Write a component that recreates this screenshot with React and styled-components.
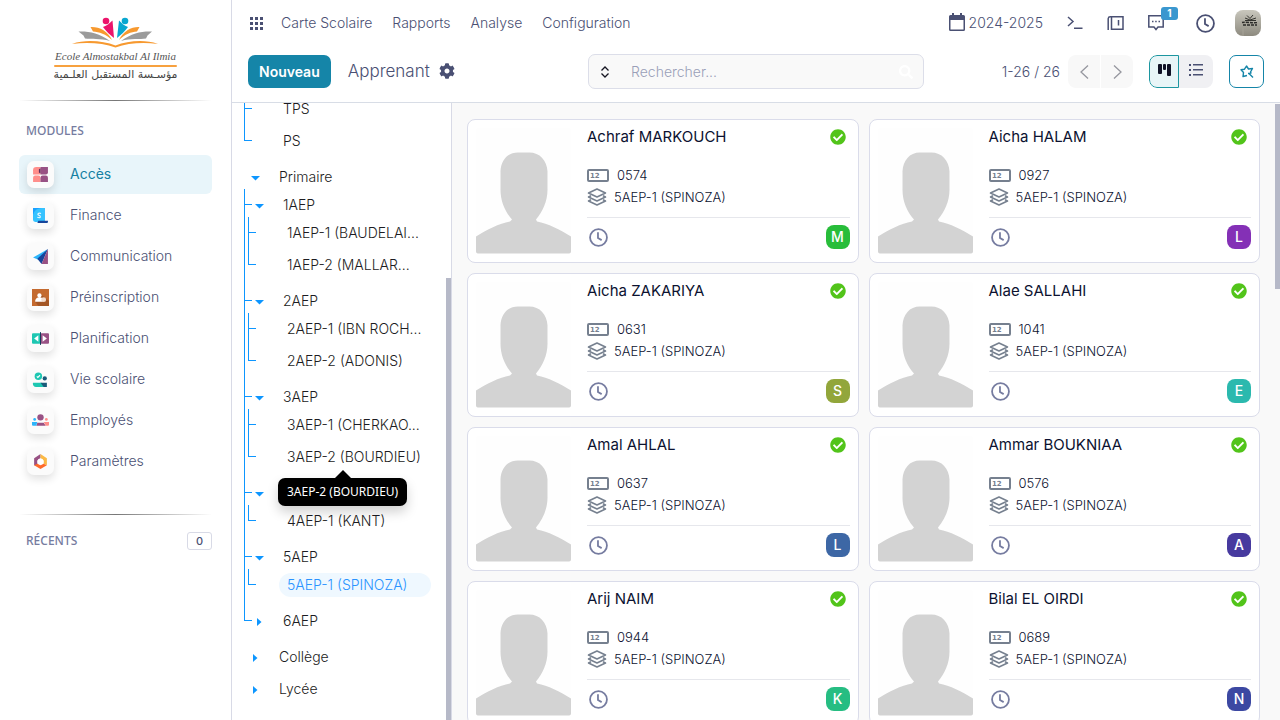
import React from "react";
import styled, { createGlobalStyle, css } from "styled-components";
import { FaCheckCircle, FaCog, FaSearch } from "react-icons/fa";

const GlobalStyle = createGlobalStyle`
  *, *::before, *::after { box-sizing: border-box; }
  body {
    margin: 0;
    background: #fff;
    color: #4a5073;
    font: 300 14px/20px Inter, "Noto Sans", sans-serif;
  }
  button, input { font: inherit; color: inherit; }
  button { border: 0; padding: 0; background: none; cursor: pointer; }
  a { color: inherit; text-decoration: none; }
  ul { list-style: none; margin: 0; padding: 0; }
  svg { display: block; flex: none; }
`;

/* ---------- Shell ---------- */

const Shell = styled.div`
  display: flex;
  height: 100vh;
  overflow: hidden;
`;

const Main = styled.div`
  flex: 1;
  min-width: 0;
  display: flex;
  flex-direction: column;
`;

const Workspace = styled.div`
  flex: 1;
  min-height: 0;
  display: flex;
`;

const ScrollThumb = styled.div`
  position: absolute;
  right: 0;
  top: ${(p) => p.$top}px;
  width: 5px;
  ${(p) => (p.$height ? `height: ${p.$height}px;` : "bottom: 0;")}
  background: #b6b9c8;
`;

/* ---------- Sidebar ---------- */

const Sidebar = styled.aside`
  flex: 0 0 232px;
  display: flex;
  flex-direction: column;
  padding: 16px 19px;
  border-right: 1px solid #d8dae6;
`;

const LogoLink = styled.a`
  align-self: center;
  height: 68px;
`;

const Rule = styled.hr`
  width: 100%;
  height: 1px;
  margin: 0;
  border: 0;
  background: linear-gradient(90deg, transparent, #777 50%, transparent);
`;

const SectionHead = styled.div`
  display: flex;
  align-items: center;
  justify-content: space-between;
  padding: 0 0 0 7px;
`;

const SectionTitle = styled.h2`
  margin: 0;
  font: 500 12px/20px "Noto Sans", sans-serif;
  color: #767ca0;
`;

const Spacer = styled.div`
  height: ${(p) => p.$size}px;
`;

const ModuleList = styled.ul`
  display: flex;
  flex-direction: column;
  gap: 2px;
`;

const ModuleLink = styled.a`
  display: flex;
  align-items: center;
  gap: 16px;
  height: 39px;
  padding: 0 8px;
  border-radius: 6px;
  ${(p) =>
    p.$active &&
    css`
      background: #e8f5fa;
      color: #1580a2;
      font-weight: 400;
    `}
`;

const ModuleLabel = styled.span`
  padding-bottom: 2px;
`;

const ModuleTile = styled.span`
  display: grid;
  place-items: center;
  width: 27px;
  height: 27px;
  border-radius: 7px;
  background: #fbfbfb;
  box-shadow: 0 4px 8px rgba(0, 0, 0, 0.12);
`;

const CountBox = styled.span`
  width: 25px;
  height: 18px;
  border: 1px solid #d8dae6;
  border-radius: 3px;
  text-align: center;
  font-size: 11px;
  font-weight: 500;
  line-height: 16px;
`;

/* ---------- Header ---------- */

const Header = styled.header`
  border-bottom: 1px solid #d8dde6;
`;

const NavBar = styled.nav`
  display: flex;
  align-items: center;
  justify-content: space-between;
  height: 46px;
  padding: 0 19px 0 18px;
`;

const NavGroup = styled.div`
  display: flex;
  align-items: center;
  gap: ${(p) => p.$gap}px;
`;

const IconButton = styled.button`
  display: flex;
  align-items: center;
  gap: 4px;
  position: relative;
`;

const Badge = styled.span`
  position: absolute;
  left: 13px;
  top: -8px;
  width: 17px;
  height: 13px;
  border-radius: 3px;
  background: #3a97cf;
  color: #fff;
  font: 700 10px/13px Inter, sans-serif;
  text-align: center;
`;

const ControlPanel = styled.div`
  display: flex;
  align-items: center;
  padding: 8px 16px 13px;
`;

const ControlSide = styled.div`
  flex: 1;
  display: flex;
  align-items: center;
  gap: 16px;
  justify-content: ${(p) => (p.$end ? "flex-end" : "flex-start")};
`;

const PrimaryButton = styled.button`
  height: 33px;
  padding: 0 11px;
  border-radius: 7px;
  background: #1585a8;
  color: #fff;
  font-weight: 600;
`;

const PageTitle = styled.h1`
  margin: 0;
  font-size: 17px;
  font-weight: 300;
  line-height: 24px;
`;

const TitleGroup = styled.div`
  display: flex;
  align-items: center;
  gap: 9px;
  padding: 0 0 2px 1px;
`;

const SearchBox = styled.div`
  flex: 0 1 336px;
  display: flex;
  align-items: center;
  height: 35px;
  padding: 0 10px;
  border: 1px solid #dcdee9;
  border-radius: 7px;
  background: #f9f9f9;
`;

const SearchInput = styled.input`
  flex: 1;
  min-width: 0;
  border: 0;
  padding: 0 20px;
  outline: 0;
  background: none;
  &::placeholder { color: #9a9fb8; opacity: 1; }
`;

const PagerGroup = styled.div`
  display: flex;
  align-items: center;
  gap: 8px;
`;

const Segmented = styled.div`
  display: flex;
  gap: ${(p) => p.$gap || 0}px;
  height: 33px;
  border-radius: 8px;
  overflow: hidden;
`;

const SegmentButton = styled.button`
  display: grid;
  place-items: center;
  width: ${(p) => p.$width}px;
  padding-bottom: ${(p) => (p.$muted ? 0 : 4)}px;
  background: ${(p) => (p.$muted ? "#f8f8f8" : "#f0f0f3")};
  ${(p) =>
    p.$active &&
    css`
      border: 1px solid #1c96a0;
      border-radius: 8px 0 0 8px;
      background: #e8f5f7;
    `}
`;

const OutlineButton = styled.button`
  display: grid;
  place-items: center;
  width: 35px;
  height: 33px;
  border: 1px solid #1585a8;
  border-radius: 7px;
`;

/* ---------- Tree ---------- */

const TreePanel = styled.aside`
  position: relative;
  flex: none;
  width: 220px;
  border-right: 1px solid #d8dae6;
`;

const TreeScroll = styled.div`
  height: 100%;
  padding: 0 20px 0 8px;
  overflow: hidden;
`;

const TreeRoot = styled.ul`
  margin-top: -10px;
`;

const Branch = styled.ul`
  padding-left: 4px;
`;

const TreeItem = styled.li`
  padding: 4px 0;
  ${Branch} > & {
    background-image: linear-gradient(#0d96ff, #0d96ff), linear-gradient(#0d96ff, #0d96ff);
    background-repeat: no-repeat;
    background-position: 0 0, 0 15px;
    background-size: 1px 100%, 8px 1px;
  }
  ${Branch} > &:last-child {
    background-size: 1px 16px, 8px 1px;
  }
`;

const TreeRow = styled.div`
  display: flex;
  align-items: center;
`;

const CaretCell = styled.span`
  flex: 0 0 31px;
  display: grid;
  place-items: center;
`;

const TreeLabel = styled.button`
  flex: 1;
  min-width: 0;
  height: 24px;
  padding: 0 8px;
  border-radius: 12px;
  text-align: left;
  white-space: nowrap;
  color: ${(p) => (p.$active ? "#2a93ff" : "#1c1c22")};
  background: ${(p) => (p.$active ? "#eff8ff" : "none")};
`;

const Tooltip = styled.div`
  position: absolute;
  left: 46px;
  top: 375px;
  padding: 4px 9px;
  border-radius: 7px;
  background: #000;
  color: #fff;
  font: 400 12px/20px "Noto Sans", sans-serif;
  white-space: nowrap;
  box-shadow: 0 6px 12px rgba(0, 0, 0, 0.18);
  &::before {
    content: "";
    position: absolute;
    left: 50%;
    top: -8px;
    margin-left: -8px;
    border: 8px solid transparent;
    border-top: 0;
    border-bottom-color: #000;
  }
`;

/* ---------- Kanban ---------- */

const Board = styled.main`
  position: relative;
  flex: 1;
  min-width: 0;
  overflow: hidden;
  padding: 16px 20px 0 15px;
  background: #f9f9f9;
`;

const CardGrid = styled.div`
  display: grid;
  grid-template-columns: repeat(auto-fill, minmax(340px, 1fr));
  gap: 10px;
`;

const Card = styled.article`
  display: flex;
  gap: 16px;
  padding: 8px;
  border: 1px solid #dadcea;
  border-radius: 8px;
  background: #fff;
  color: #0c1230;
`;

const CardBody = styled.div`
  flex: 1;
  min-width: 0;
  display: flex;
  flex-direction: column;
`;

const CardHead = styled.div`
  display: flex;
  align-items: center;
  justify-content: space-between;
  height: 18px;
  padding-right: 4px;
  margin-bottom: 18px;
`;

const CardName = styled.h3`
  margin: 0;
  font-size: 15px;
  font-weight: 400;
  line-height: 18px;
`;

const CardLine = styled.div`
  display: flex;
  align-items: center;
  gap: ${(p) => p.$gap}px;
  height: 22px;
  font-size: 13px;
`;

const CardFoot = styled.div`
  display: flex;
  align-items: center;
  justify-content: space-between;
  margin-top: 9px;
  padding: 7px 0 5px 2px;
  border-top: 1px solid #e6e7ec;
`;

const Initial = styled.span`
  width: 24px;
  height: 24px;
  border-radius: 8px;
  background: ${(p) => p.$color};
  color: #fff;
  font-size: 14px;
  font-weight: 500;
  line-height: 24px;
  text-align: center;
`;

/* ---------- Drawings ---------- */

const SchoolLogo = () => (
  <svg width="128" height="68" viewBox="0 0 128 68" role="img" aria-label="Ecole Almostakbal Al Ilmia">
    <g fill="#9b9b9b">
      <path d="M26.500 15.500C36 15 47 17 58 25C48 22 39 23.500 33 22.500L31.500 19.500Z" />
      <path d="M100 15.500C90 15 80 17 69 25C79 22 88 23.500 94 22.500L95.500 19.500Z" />
    </g>
    <g fill="#f7992f">
      <path d="M38.500 11C47 10.500 56 15 60 24C54 18 47 16 41 15.500Z" />
      <path d="M87.500 11C80 10.500 71 15 67 24C73 18 79 16 85 15.500Z" />
      <path d="M20 28C34 23 51 25 63.500 29.500C76 25 92 23 106 28C91 26 76 27 63.500 31.500C51 27 35 26 20 28Z" />
    </g>
    <circle cx="54" cy="5" r="3.300" fill="#ec146b" />
    <path d="M51 11C55 10 58 6.500 60.500 4.500L62 22C58 19 54 15 51 11Z" fill="#ec146b" />
    <circle cx="73" cy="5" r="3.300" fill="#09a7d0" />
    <path d="M76 11C72 10 69.500 6.500 67 4.500L65 22C69 19 73 15 76 11Z" fill="#09a7d0" />
    <text x="63.500" y="44" textAnchor="middle" fontFamily="'Liberation Serif', serif" fontStyle="italic" fontWeight="400" fontSize="11" fill="#555">
      Ecole Almostakbal Al Ilmia
    </text>
    <rect x="2" y="49" width="123" height="2" rx="1" fill="#f7a13f" />
    <text x="63.500" y="62" textAnchor="middle" fontFamily="'DejaVu Sans', sans-serif" fontSize="11" fontWeight="400" fill="#444" direction="rtl">
      مؤسـسة المستقبل العلـمية
    </text>
  </svg>
);

const moduleArt = {
  access: (
    <>
      <path fill="#ff8e8b" d="M1 4a3 3 0 0 1 3-3h4v7H1z" />
      <path fill="#ff8e8b" d="M1 15v-4a2 2 0 0 1 2-2h3a2 2 0 0 1 2 2v4z" />
      <path fill="#985184" d="M8 1h7v5a2 2 0 0 1-2 2H8z" />
      <path fill="#985184" d="M8 15v-4a2 2 0 0 1 2-2h3a2 2 0 0 1 2 2v4z" />
      <path fill="#5f2d60" d="M6.500 3 8 2v5L6.500 6z" />
    </>
  ),
  finance: (
    <>
      <path fill="#1aa0ff" d="M1 1h11v12H3a2 2 0 0 1-2-2z" />
      <path fill="#35c3ff" d="M1 7a7 7 0 0 1 6-6h5v13H3a2 2 0 0 1-2-2z" />
      <path fill="#1aa0ff" d="M1 1h9A9 9 0 0 0 1 7z" />
      <path fill="#17459b" d="M5 15l1-2h9v1a1 1 0 0 1-1 1z" />
      <path fill="none" stroke="#eaf8ff" strokeWidth="1.100" d="M8.500 6.200C6 5 4.500 7 6.500 7.800S8.500 11 5 9.700" />
    </>
  ),
  communication: (
    <>
      <path fill="#2cb5fb" d="M1 9 15 1 6 11z" />
      <path fill="#17459b" d="M15 1 5 10l4 5z" />
      <path fill="#985184" d="M15 1v14H9z" />
    </>
  ),
  preinscription: (
    <>
      <rect width="16" height="16" fill="#c46a2f" />
      <path fill="#8f4a1f" d="M8 5l8 6v5H6l-3-4z" opacity=".6" />
      <circle cx="7" cy="6" r="2" fill="#fff" />
      <path fill="#fff" d="M3 12a4 4 0 0 1 7-3v3z" />
      <circle cx="11" cy="10" r="2.300" fill="#f2dccd" />
    </>
  ),
  planification: (
    <>
      <rect y="3" width="8" height="10" rx="1" fill="#1ec7b2" />
      <rect x="8" y="3" width="8" height="10" rx="1" fill="#985184" />
      <path fill="#fff" d="M6 5v6L2 8zM10 5v6l4-3z" />
      <path stroke="#153c5a" d="M8 2v12" />
    </>
  ),
  school: (
    <>
      <circle cx="6" cy="5" r="3.500" fill="#1ec7b2" />
      <path fill="none" stroke="#fff" d="M4.500 5l1 1 2-2" />
      <path fill="#1ec7b2" d="M1 11h8l3 4H4a3 3 0 0 1-3-4z" />
      <circle cx="12" cy="7" r="2" fill="#1b5b7a" />
      <path fill="#1b5b7a" d="M8 11h6v4h-3z" />
    </>
  ),
  employees: (
    <>
      <circle cx="8" cy="5" r="3" fill="#985184" />
      <path fill="#985184" d="M4 13l1-3h6l2 3z" />
      <circle cx="2.500" cy="7" r="1.300" fill="#2cb5fb" />
      <path fill="#2cb5fb" d="M0 9.500h5L4 13H1a1 1 0 0 1-1-1z" />
      <circle cx="13.500" cy="7" r="1.300" fill="#ff8e8b" />
      <path fill="#ff8e8b" d="M11 9.500h5V12a1 1 0 0 1-1 1h-2z" />
    </>
  ),
  settings: (
    <>
      <path fill="#985184" d="M8 1v4L5 7v5L2 11.500V5z" />
      <path fill="#fbb945" d="M8 1l6 4v6.500L11 10V7L8 5z" />
      <path fill="#ff6a2a" d="M2 11.500 5 10l3 1.500 3-1.500 3 1.500L8 15z" />
      <circle cx="8" cy="8" r="2.800" fill="#fff" />
    </>
  ),
};

const ModuleIcon = ({ name }) => (
  <svg width="17" height="17" viewBox="0 0 16 16" aria-hidden="true">
    {moduleArt[name]}
  </svg>
);

const AppsIcon = () => (
  <svg width="13" height="13" viewBox="0 0 13 13" fill="#4a5073" aria-hidden="true">
    {[0, 5, 10].map((y) => [0, 5, 10].map((x) => <rect key={`${x}-${y}`} x={x} y={y} width="3" height="3" />))}
  </svg>
);

const ClockIcon = ({ size = 18, color = "#4a5073" }) => (
  <svg width={size} height={size} viewBox="0 0 18 18" fill="none" stroke={color} strokeWidth="1.700" aria-hidden="true">
    <circle cx="9" cy="9" r="8" />
    <path d="M8.500 4v5.500l3.500 2" />
  </svg>
);

const CalendarIcon = () => (
  <svg width="16" height="20" viewBox="0 0 16 20" aria-hidden="true">
    <path fill="#4a5073" fillRule="evenodd" d="M3 0h2v2h6V0h2v2h1.500A1.500 1.500 0 0 1 16 3.500v13a1.500 1.500 0 0 1-1.500 1.500h-13A1.500 1.500 0 0 1 0 16.500v-13A1.500 1.500 0 0 1 1.500 2H3zM1.500 7v9.500h13V7z" />
  </svg>
);

const TerminalIcon = () => (
  <svg width="16" height="14" viewBox="0 0 16 14" fill="none" stroke="#4a5073" strokeWidth="1.500" aria-hidden="true">
    <path d="M1 1l5 4.500L1 10M7 12.200h8.500" />
  </svg>
);

const BookIcon = () => (
  <svg width="17" height="15" viewBox="0 0 17 15" fill="none" stroke="#4a5073" strokeWidth="1.500" aria-hidden="true">
    <path d="M1.200 14V2.500a2 2 0 0 1 2-1.700h12.800v12.400H4.500V1M11.500 4v5.500" />
  </svg>
);

const MessageIcon = () => (
  <svg width="16" height="16" viewBox="0 0 16 16" fill="none" stroke="#4a5073" strokeWidth="1.500" aria-hidden="true">
    <path d="M.8.800h14.400v11.200H10l-2 2.500-2-2.500H.8z" />
    <path d="M4 6.500h1.500M7.200 6.500h1.500M10.500 6.500h1.500" />
  </svg>
);

const UserPhoto = () => (
  <svg width="26" height="26" viewBox="0 0 26 26" role="img" aria-label="Utilisateur">
    <defs>
      <linearGradient id="wall" x1="0" y1="0" x2="0" y2="1">
        <stop offset="0" stopColor="#c9c7bd" />
        <stop offset="1" stopColor="#8d8a7f" />
      </linearGradient>
    </defs>
    <rect width="26" height="26" rx="8" fill="url(#wall)" />
    <path d="M10 8l5 2 6-2M12 5.500l3 3 3-3.500M10 10.500h11" fill="none" stroke="#33332f" strokeWidth="1" />
    <path d="M7 12.500c4-1 10 1 16 0M8 15h14" fill="none" stroke="#2b2b28" strokeWidth="1.400" strokeDasharray="3 1" />
    <path d="M8 18v8" stroke="#a5a297" />
  </svg>
);

const SortIcon = () => (
  <svg width="12" height="12" viewBox="0 0 12 12" fill="none" stroke="#161622" strokeWidth="1.300" aria-hidden="true">
    <path d="M2.500 4.500 6 1l3.500 3.500M2.500 7.500 6 11l3.500-3.500" />
  </svg>
);

const Chevron = ({ right }) => (
  <svg width="9" height="14" viewBox="0 0 9 14" fill="none" stroke="#96979f" strokeWidth="1.300" aria-hidden="true">
    <path d={right ? "M1 .500 8 7l-7 6.500" : "M8 .500 1 7l7 6.500"} />
  </svg>
);

const KanbanIcon = () => (
  <svg width="13" height="12" viewBox="0 0 13 12" fill="#101226" aria-hidden="true">
    <rect width="4" height="10" rx="1" />
    <rect x="5" width="3" height="6" rx="1" />
    <rect x="9" width="4" height="12" rx="1" />
  </svg>
);

const ListIcon = () => (
  <svg width="14" height="12" viewBox="0 0 14 12" fill="#4a5073" aria-hidden="true">
    {[0, 5, 10].map((y) => (
      <g key={y}>
        <rect y={y} width="2" height="2" />
        <rect x="4" y={y} width="10" height="1.500" />
      </g>
    ))}
  </svg>
);

const StarIcon = () => (
  <svg width="14" height="14" viewBox="0 0 14 14" fill="none" stroke="#1585a8" strokeWidth="1.400" strokeLinejoin="round" aria-hidden="true">
    <path d="M7 10.500 3 11.500l.5-4L1 4.800l3.500-.6L6.500 1l2 3 4-.500L10.500 7l.8 1.500M8 8.500h2.500M8.500 8l4.500 4.500" />
  </svg>
);

const Caret = ({ open }) => (
  <svg width="9" height="9" viewBox="0 0 9 9" fill="#0d96ff" aria-hidden="true">
    <path d={open ? "M0 3h9L4.500 7.500z" : "M2 1v8l4.500-4z"} />
  </svg>
);

const Silhouette = ({ name }) => (
  <svg width="95" height="126" viewBox="0 0 95 126" role="img" aria-label={name}>
    <rect width="95" height="126" rx="2" fill="#fefefe" />
    <path
      fill="#d3d3d3"
      d="M42 24.500h11c11 0 18 8 18.500 19v18c0 12-5 22-11.500 30l1 2c11 2 23 8 34 15v15a2 2 0 0 1-2 2H2a2 2 0 0 1-2-2v-15c11-7 23-13 34-15l2-2c-7-8-11.500-18-11.500-30v-18c.500-11 7-19 17.500-19z"
    />
  </svg>
);

const NumberIcon = () => (
  <svg width="22" height="13" viewBox="0 0 22 13" aria-hidden="true">
    <rect x="1" y="1" width="20" height="11" rx="1" fill="none" stroke="#76808f" strokeWidth="2" />
    <text x="3" y="9" fontFamily="'DejaVu Sans', sans-serif" fontWeight="700" fontSize="7" fill="#76808f">12</text>
  </svg>
);

const LayersIcon = () => (
  <svg width="20" height="18" viewBox="0 0 20 18" fill="none" stroke="#76808f" strokeWidth="1.600" strokeLinejoin="round" aria-hidden="true">
    <path d="M1.500 5 10 1l8.500 4L10 9zM4 7.800 1.500 9 10 13l8.500-4L16 7.800M4 11.800 1.500 13l8.500 4 8.500-4-2.500-1.200" />
  </svg>
);

/* ---------- Data ---------- */

const modules = [
  ["access", "Accès"],
  ["finance", "Finance"],
  ["communication", "Communication"],
  ["preinscription", "Préinscription"],
  ["planification", "Planification"],
  ["school", "Vie scolaire"],
  ["employees", "Employés"],
  ["settings", "Paramètres"],
];

const primaire = [
  { label: "1AEP", children: [{ label: "1AEP-1 (BAUDELAI..." }, { label: "1AEP-2 (MALLAR..." }] },
  { label: "2AEP", children: [{ label: "2AEP-1 (IBN ROCH..." }, { label: "2AEP-2 (ADONIS)" }] },
  { label: "3AEP", children: [{ label: "3AEP-1 (CHERKAO..." }, { label: "3AEP-2 (BOURDIEU)" }] },
  { label: "4AEP", children: [{ label: "4AEP-1 (KANT)" }] },
  { label: "5AEP", children: [{ label: "5AEP-1 (SPINOZA)", active: true }] },
  { label: "6AEP", collapsed: true },
];

const tree = [
  { label: "Primaire", children: primaire },
  { label: "Collège", collapsed: true },
  { label: "Lycée", collapsed: true },
];

const students = [
  ["Achraf MARKOUCH", "0574", "M", "#28bd3a"],
  ["Aicha HALAM", "0927", "L", "#8430b6"],
  ["Aicha ZAKARIYA", "0631", "S", "#92a63b"],
  ["Alae SALLAHI", "1041", "E", "#2bb9ae"],
  ["Amal AHLAL", "0637", "L", "#3d67a5"],
  ["Ammar BOUKNIAA", "0576", "A", "#473a9f"],
  ["Arij NAIM", "0944", "K", "#26bd82"],
  ["Bilal EL OIRDI", "0689", "N", "#3c48a2"],
];

/* ---------- Parts ---------- */

const TreeNode = ({ node }) => (
  <TreeItem>
    <TreeRow>
      <CaretCell>{(node.children || node.collapsed) && <Caret open={!node.collapsed} />}</CaretCell>
      <TreeLabel $active={node.active}>{node.label}</TreeLabel>
    </TreeRow>
    {node.children && (
      <Branch>
        {node.children.map((child) => (
          <TreeNode key={child.label} node={child} />
        ))}
      </Branch>
    )}
  </TreeItem>
);

const StudentCard = ({ name, number, initial, color }) => (
  <Card>
    <Silhouette name={name} />
    <CardBody>
      <CardHead>
        <CardName>{name}</CardName>
        <FaCheckCircle size={16} color="#52c41a" />
      </CardHead>
      <CardLine $gap={8}>
        <NumberIcon />
        {number}
      </CardLine>
      <CardLine $gap={7}>
        <LayersIcon />
        5AEP-1 (SPINOZA)
      </CardLine>
      <CardFoot>
        <IconButton aria-label="Activités">
          <ClockIcon size={19} color="#767ca0" />
        </IconButton>
        <Initial $color={color}>{initial}</Initial>
      </CardFoot>
    </CardBody>
  </Card>
);

export default function App() {
  return (
    <Shell>
      <GlobalStyle />
      <Sidebar>
        <LogoLink href="#accueil">
          <SchoolLogo />
        </LogoLink>
        <Spacer $size={16} />
        <Rule />
        <Spacer $size={20} />
        <SectionHead>
          <SectionTitle>MODULES</SectionTitle>
        </SectionHead>
        <Spacer $size={14} />
        <ModuleList>
          {modules.map(([icon, label], i) => (
            <li key={icon}>
              <ModuleLink href={`#${icon}`} $active={i === 0}>
                <ModuleTile>
                  <ModuleIcon name={icon} />
                </ModuleTile>
                <ModuleLabel>{label}</ModuleLabel>
              </ModuleLink>
            </li>
          ))}
        </ModuleList>
        <Spacer $size={33} />
        <Rule />
        <Spacer $size={16} />
        <SectionHead>
          <SectionTitle>RÉCENTS</SectionTitle>
          <CountBox>0</CountBox>
        </SectionHead>
      </Sidebar>

      <Main>
        <Header>
          <NavBar>
            <NavGroup $gap={18}>
              <IconButton aria-label="Applications">
                <AppsIcon />
              </IconButton>
              <NavGroup $gap={20}>
                <a href="#carte">Carte Scolaire</a>
                <a href="#rapports">Rapports</a>
                <a href="#analyse">Analyse</a>
                <a href="#configuration">Configuration</a>
              </NavGroup>
            </NavGroup>
            <NavGroup $gap={20}>
              <NavGroup $gap={32}>
                <NavGroup $gap={24}>
                  <IconButton>
                    <CalendarIcon />
                    2024-2025
                  </IconButton>
                  <IconButton aria-label="Console">
                    <TerminalIcon />
                  </IconButton>
                  <IconButton aria-label="Journal">
                    <BookIcon />
                  </IconButton>
                  <IconButton aria-label="Messages">
                    <MessageIcon />
                    <Badge>1</Badge>
                  </IconButton>
                </NavGroup>
                <IconButton aria-label="Activités">
                  <ClockIcon size={19} />
                </IconButton>
              </NavGroup>
              <IconButton aria-label="Profil">
                <UserPhoto />
              </IconButton>
            </NavGroup>
          </NavBar>
          <ControlPanel>
            <ControlSide>
              <PrimaryButton>Nouveau</PrimaryButton>
              <TitleGroup>
                <PageTitle>Apprenant</PageTitle>
                <IconButton aria-label="Réglages">
                  <FaCog size={16} />
                </IconButton>
              </TitleGroup>
            </ControlSide>
            <SearchBox>
              <SortIcon />
              <SearchInput type="search" aria-label="Rechercher" placeholder="Rechercher..." />
              <FaSearch size={14} color="#fff" />
            </SearchBox>
            <ControlSide $end>
              <PagerGroup>
                <span>1-26 / 26</span>
                <Segmented $gap={1}>
                  <SegmentButton $muted $width={32} aria-label="Précédent">
                    <Chevron />
                  </SegmentButton>
                  <SegmentButton $muted $width={32} aria-label="Suivant">
                    <Chevron right />
                  </SegmentButton>
                </Segmented>
              </PagerGroup>
              <Segmented>
                <SegmentButton $active $width={30} aria-label="Kanban">
                  <KanbanIcon />
                </SegmentButton>
                <SegmentButton $width={34} aria-label="Liste">
                  <ListIcon />
                </SegmentButton>
              </Segmented>
              <OutlineButton aria-label="Favoris">
                <StarIcon />
              </OutlineButton>
            </ControlSide>
          </ControlPanel>
        </Header>

        <Workspace>
          <TreePanel>
            <TreeScroll>
              <TreeRoot>
                <li>
                  <Branch>
                    <TreeNode node={{ label: "TPS" }} />
                    <TreeNode node={{ label: "PS" }} />
                  </Branch>
                  <Spacer $size={4} />
                </li>
                {tree.map((node) => (
                  <TreeNode key={node.label} node={node} />
                ))}
              </TreeRoot>
            </TreeScroll>
            <Tooltip role="tooltip">3AEP-2 (BOURDIEU)</Tooltip>
            <ScrollThumb $top={175} />
          </TreePanel>
          <Board>
            <CardGrid>
              {students.map(([name, number, initial, color]) => (
                <StudentCard key={name} name={name} number={number} initial={initial} color={color} />
              ))}
            </CardGrid>
            <ScrollThumb $top={1} $height={185} />
          </Board>
        </Workspace>
      </Main>
    </Shell>
  );
}
